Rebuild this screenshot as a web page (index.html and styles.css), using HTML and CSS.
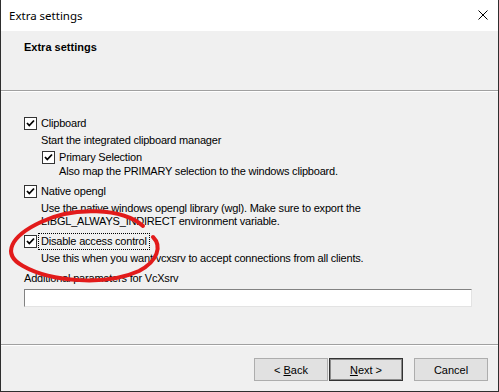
FILE: index.html
```html
<!DOCTYPE html>
<html lang="en">
<head>
  <meta charset="UTF-8" />
  <title>Extra settings</title>
  <link rel="stylesheet" href="styles.css">
</head>
<body>
  <div class="window">
    <div class="titlebar">
      <span class="title">Extra settings</span>
      <svg class="close" width="10" height="10" viewBox="0 0 10 10">
        <path d="M0.5 0.5 L9.5 9.5 M9.5 0.5 L0.5 9.5" stroke="#000" stroke-width="1" fill="none" />
      </svg>
    </div>

    <div class="header">
      <h1>Extra settings</h1>
    </div>

    <div class="content">
      <label class="option">
        <span class="check"><svg width="13" height="13" viewBox="0 0 13 13"><path d="M3 6 L5.3 8.5 L10 3.5" /></svg></span>
        <span>Clipboard</span>
      </label>
      <div class="desc">Start the integrated clipboard manager</div>

      <label class="option sub">
        <span class="check"><svg width="13" height="13" viewBox="0 0 13 13"><path d="M3 6 L5.3 8.5 L10 3.5" /></svg></span>
        <span>Primary Selection</span>
      </label>
      <div class="desc sub">Also map the PRIMARY selection to the windows clipboard.</div>

      <label class="option gap">
        <span class="check"><svg width="13" height="13" viewBox="0 0 13 13"><path d="M3 6 L5.3 8.5 L10 3.5" /></svg></span>
        <span>Native opengl</span>
      </label>
      <div class="desc">Use the native windows opengl library (wgl). Make sure to export the<br>LIBGL_ALWAYS_INDIRECT environment variable.</div>

      <label class="option gap">
        <span class="check"><svg width="13" height="13" viewBox="0 0 13 13"><path d="M3 6 L5.3 8.5 L10 3.5" /></svg></span>
        <span class="focused">Disable access control</span>
      </label>
      <div class="desc">Use this when you want vcxsrv to accept connections from all clients.</div>

      <div class="field-label">Additional parameters for VcXsrv</div>
      <input type="text" class="field" />
    </div>

    <div class="footer">
      <div class="nav-buttons">
        <button class="btn">&lt; <u>B</u>ack</button>
        <button class="btn default"><u>N</u>ext &gt;</button>
      </div>
      <button class="btn">Cancel</button>
    </div>

    <svg class="scribble" width="499" height="392" viewBox="0 0 499 392">
      <path d="M142 226 C 122 208, 72 206, 40 222 C 10 236, 0 254, 22 266 C 50 282, 105 286, 138 271 C 157 261, 161 246, 152 237" />
    </svg>
  </div>
</body>
</html>
```

FILE: styles.css
```css
* {
  box-sizing: border-box;
}

body {
  margin: 0;
  font-family: 'Liberation Sans', Arial, sans-serif;
  font-size: 11px;
  letter-spacing: -0.2px;
  color: #000;
}

.window {
  position: relative;
  width: 499px;
  height: 392px;
  display: flex;
  flex-direction: column;
  background: #f0f0f0;
  border-left: 1px solid #2e2e2e;
  border-right: 1px solid #2e2e2e;
  border-bottom: 1px solid #2e2e2e;
}

.titlebar {
  height: 31px;
  flex-shrink: 0;
  background: #fff;
  display: flex;
  align-items: center;
  justify-content: space-between;
  padding: 0 10px 1px 8px;
}

.title {
  font-family: 'Noto Sans', 'Open Sans', sans-serif;
  font-size: 11.5px;
  letter-spacing: 0;
}

.close {
  display: block;
}

.header {
  height: 60px;
  flex-shrink: 0;
  padding: 10px 23px 0;
  border-bottom: 1px solid #a0a0a0;
  box-shadow: 0 1px 0 #fff;
}

h1 {
  margin: 0;
  font-size: 11px;
  line-height: 13px;
  font-weight: bold;
  letter-spacing: 0;
}

.content {
  flex: 1;
  padding: 25px 23px 0;
}

.option {
  display: flex;
  align-items: center;
  gap: 4px;
  height: 15px;
  line-height: 13px;
}

.option.sub {
  margin-top: 3px;
  padding-left: 18px;
}

.option.gap {
  margin-top: 6px;
}

.check {
  width: 13px;
  height: 13px;
  flex-shrink: 0;
  background: #fff;
  border: 1px solid #333;
  display: flex;
}

.check svg {
  margin: -1px;
}

.check path {
  fill: none;
  stroke: #000;
  stroke-width: 1.8;
}

.focused {
  outline: 1px dotted #000;
  outline-offset: 1px;
  padding: 0 1px;
  margin-left: -1px;
}

.desc {
  margin-top: 3px;
  padding-left: 17px;
  line-height: 13px;
}

.desc.sub {
  margin-top: 0;
  padding-left: 35px;
}

.field-label {
  margin-top: 7px;
  line-height: 13px;
}

.field {
  display: block;
  margin-top: 4px;
  width: 448px;
  height: 18px;
  background: #fff;
  border: 1px solid;
  border-color: #828282 #e3e3e3 #e3e3e3 #828282;
  outline: none;
}

.footer {
  height: 47px;
  flex-shrink: 0;
  border-top: 1px solid #a0a0a0;
  box-shadow: inset 0 1px 0 #fff;
  display: flex;
  justify-content: flex-end;
  gap: 11px;
  padding: 13px 10px 0 0;
}

.nav-buttons {
  display: flex;
  gap: 1px;
  height: 23px;
}

.btn {
  width: 74px;
  height: 23px;
  padding: 0;
  font-family: inherit;
  font-size: 11px;
  letter-spacing: 0;
  color: #000;
  background: #e1e1e1;
  border: 1px solid #adadad;
}

.btn.default {
  border: 1px solid #333;
  box-shadow: inset 0 0 0 1px #8c8c8c;
}

.scribble {
  position: absolute;
  left: 0;
  top: 0;
  pointer-events: none;
}

.scribble path {
  fill: none;
  stroke: #e21b1b;
  stroke-width: 4;
  stroke-linecap: round;
}
```
